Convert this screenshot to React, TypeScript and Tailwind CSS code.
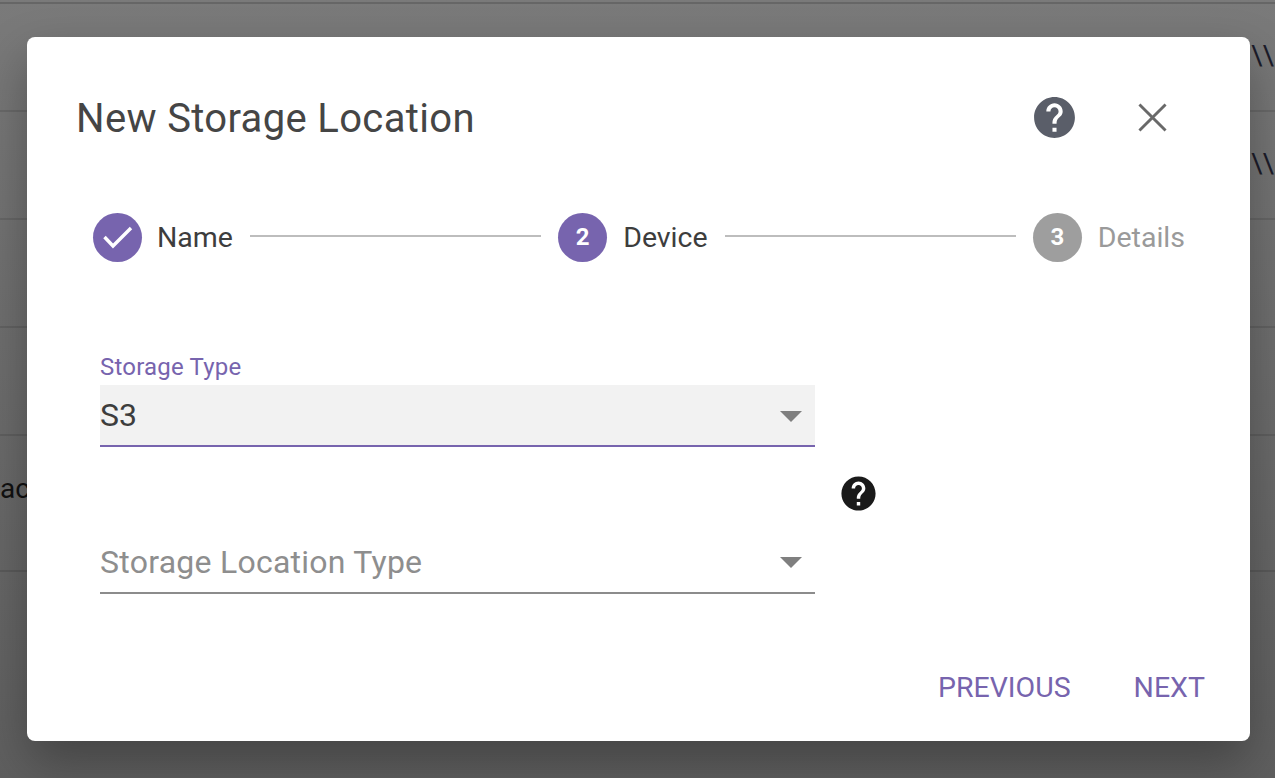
import React from 'react';

const font = { fontFamily: 'Roboto, sans-serif' };

function HelpIcon({ className }: { className: string }) {
  return (
    <svg viewBox="0 0 24 24" className={className} fill="currentColor">
      <path d="M12 2C6.48 2 2 6.48 2 12s4.48 10 10 10 10-4.48 10-10S17.52 2 12 2zm1 17h-2v-2h2v2zm2.07-7.75l-.9.92C13.45 12.9 13 13.5 13 15h-2v-.5c0-1.1.45-2.1 1.17-2.83l1.24-1.26c.37-.36.59-.86.59-1.41 0-1.1-.9-2-2-2s-2 .9-2 2H8c0-2.21 1.79-4 4-4s4 1.79 4 4c0 .88-.36 1.68-.93 2.25z" />
    </svg>
  );
}

function Caret({ className = '' }: { className?: string }) {
  return (
    <svg viewBox="0 0 22 11" className={`w-[22px] h-[11px] text-[#7f7f7f] ${className}`} fill="currentColor">
      <path d="M0 0h22L11 11z" />
    </svg>
  );
}

function Step({ n, label, state }: { n: string; label: string; state: 'done' | 'active' | 'todo' }) {
  return (
    <div className="flex items-center shrink-0">
      <div className={`w-[49px] h-[49px] rounded-full flex items-center justify-center text-white text-[24px] font-bold ${state === 'todo' ? 'bg-[#9e9e9e]' : 'bg-[#7764ae]'}`}>
        {state === 'done' ? (
          <svg viewBox="0 0 49 49" className="w-[49px] h-[49px]" fill="none" stroke="currentColor" strokeWidth="3.4">
            <path d="M11.5 24l8.5 9 18-18" />
          </svg>
        ) : <span className="-translate-y-px">{n}</span>}
      </div>
      <span className={`mt-[2px] text-[28.5px] leading-none ${state === 'done' ? 'ml-[15px]' : 'ml-[16px]'} ${state === 'todo' ? 'text-[#9a9a9a]' : 'text-[#3d3d3d]'}`}>{label}</span>
    </div>
  );
}

export default function App() {
  return (
    <div className="relative w-[1275px] h-[778px] overflow-hidden bg-[#6c6c6c]" style={font}>
      {/* page behind the dialog */}
      <div className="h-[778px] flex flex-col bg-gradient-to-b from-[#7a7a7a] to-[#5f5f5f]">
        <div className="h-[4px] border-b-2 border-[#666666] shrink-0" />
        <div className="h-[108px] border-b-2 border-[#696969] shrink-0" />
        <div className="h-[108px] border-b-2 border-[#666666] shrink-0" />
        <div className="h-[108px] border-b-2 border-[#626262] shrink-0" />
        <div className="h-[108px] border-b-2 border-[#5f5f5f] shrink-0" />
        <div className="h-[136px] border-b-2 border-[#5a5a5a] shrink-0 flex items-center pb-[28px] text-[28px] text-[#111111]">ac</div>
      </div>
      <div className="absolute left-[1251px] top-[39px] text-[28px] leading-[34px] text-[#1c1c2a]">\\</div>
      <div className="absolute left-[1251px] top-[147px] text-[28px] leading-[34px] text-[#1c1c2a]">\\</div>

      {/* dialog */}
      <div className="absolute left-[27px] top-[37px] w-[1223px] h-[704px] bg-white rounded-[8px] shadow-[0_22px_50px_rgba(0,0,0,0.3)] flex flex-col">
        <div className="flex items-center justify-between h-[42px] mt-[60px] pl-[49px] pr-[83px] shrink-0">
          <h2 className="mt-[2px] text-[40px] tracking-[0.35px] leading-none text-[#454545]">New Storage Location</h2>
          <div className="flex items-center gap-[59px] -translate-y-px">
            <HelpIcon className="w-[49px] h-[49px] text-[#5a5e69]" />
            <svg viewBox="0 0 30 30" className="w-[29px] h-[29px] text-[#696969]" fill="none" stroke="currentColor" strokeWidth="3">
              <path d="M1.5 1.5l27 27M28.5 1.5l-27 27" />
            </svg>
          </div>
        </div>

        <div className="flex items-center mt-[74px] ml-[66px] mr-[65px] shrink-0">
          <Step n="1" label="Name" state="done" />
          <div className="flex-1 h-[2px] bg-[#bdbdbd] mx-[17px] -translate-y-[2px]" />
          <Step n="2" label="Device" state="active" />
          <div className="flex-1 h-[2px] bg-[#bdbdbd] mx-[17px] -translate-y-[2px]" />
          <Step n="3" label="Details" state="todo" />
        </div>

        <div className="ml-[73px] w-[715px] mt-[92px] shrink-0">
          <div className="text-[24px] tracking-[0.2px] leading-[26px] mb-[5px] text-[#7764ae]">Storage Type</div>
          <div className="h-[62px] bg-[#f2f2f2] border-b-2 border-[#7764ae] flex items-center justify-between pr-[13px] text-[32px] text-[#3d3d3d]">
            <span>S3</span>
            <Caret className="mt-[2px]" />
          </div>
        </div>

        <div className="relative ml-[73px] w-[715px] h-[147px] shrink-0">
          <div className="absolute left-[738px] top-[26px]">
            <HelpIcon className="w-[41px] h-[41px] text-[#1a1a1a]" />
          </div>
          <div className="absolute inset-x-0 bottom-0 h-[60px] pb-[2px] border-b-2 border-[#8c8c8c] flex items-center justify-between pr-[13px] text-[32px] tracking-[0.25px] text-[#8e8e8e]">
            <span>Storage Location Type</span>
            <Caret />
          </div>
        </div>

        <div className="flex justify-end gap-[63px] mt-[80px] pr-[45px] text-[28.5px] leading-none text-[#7764ae]">
          <span>PREVIOUS</span>
          <span>NEXT</span>
        </div>
      </div>
    </div>
  );
}
